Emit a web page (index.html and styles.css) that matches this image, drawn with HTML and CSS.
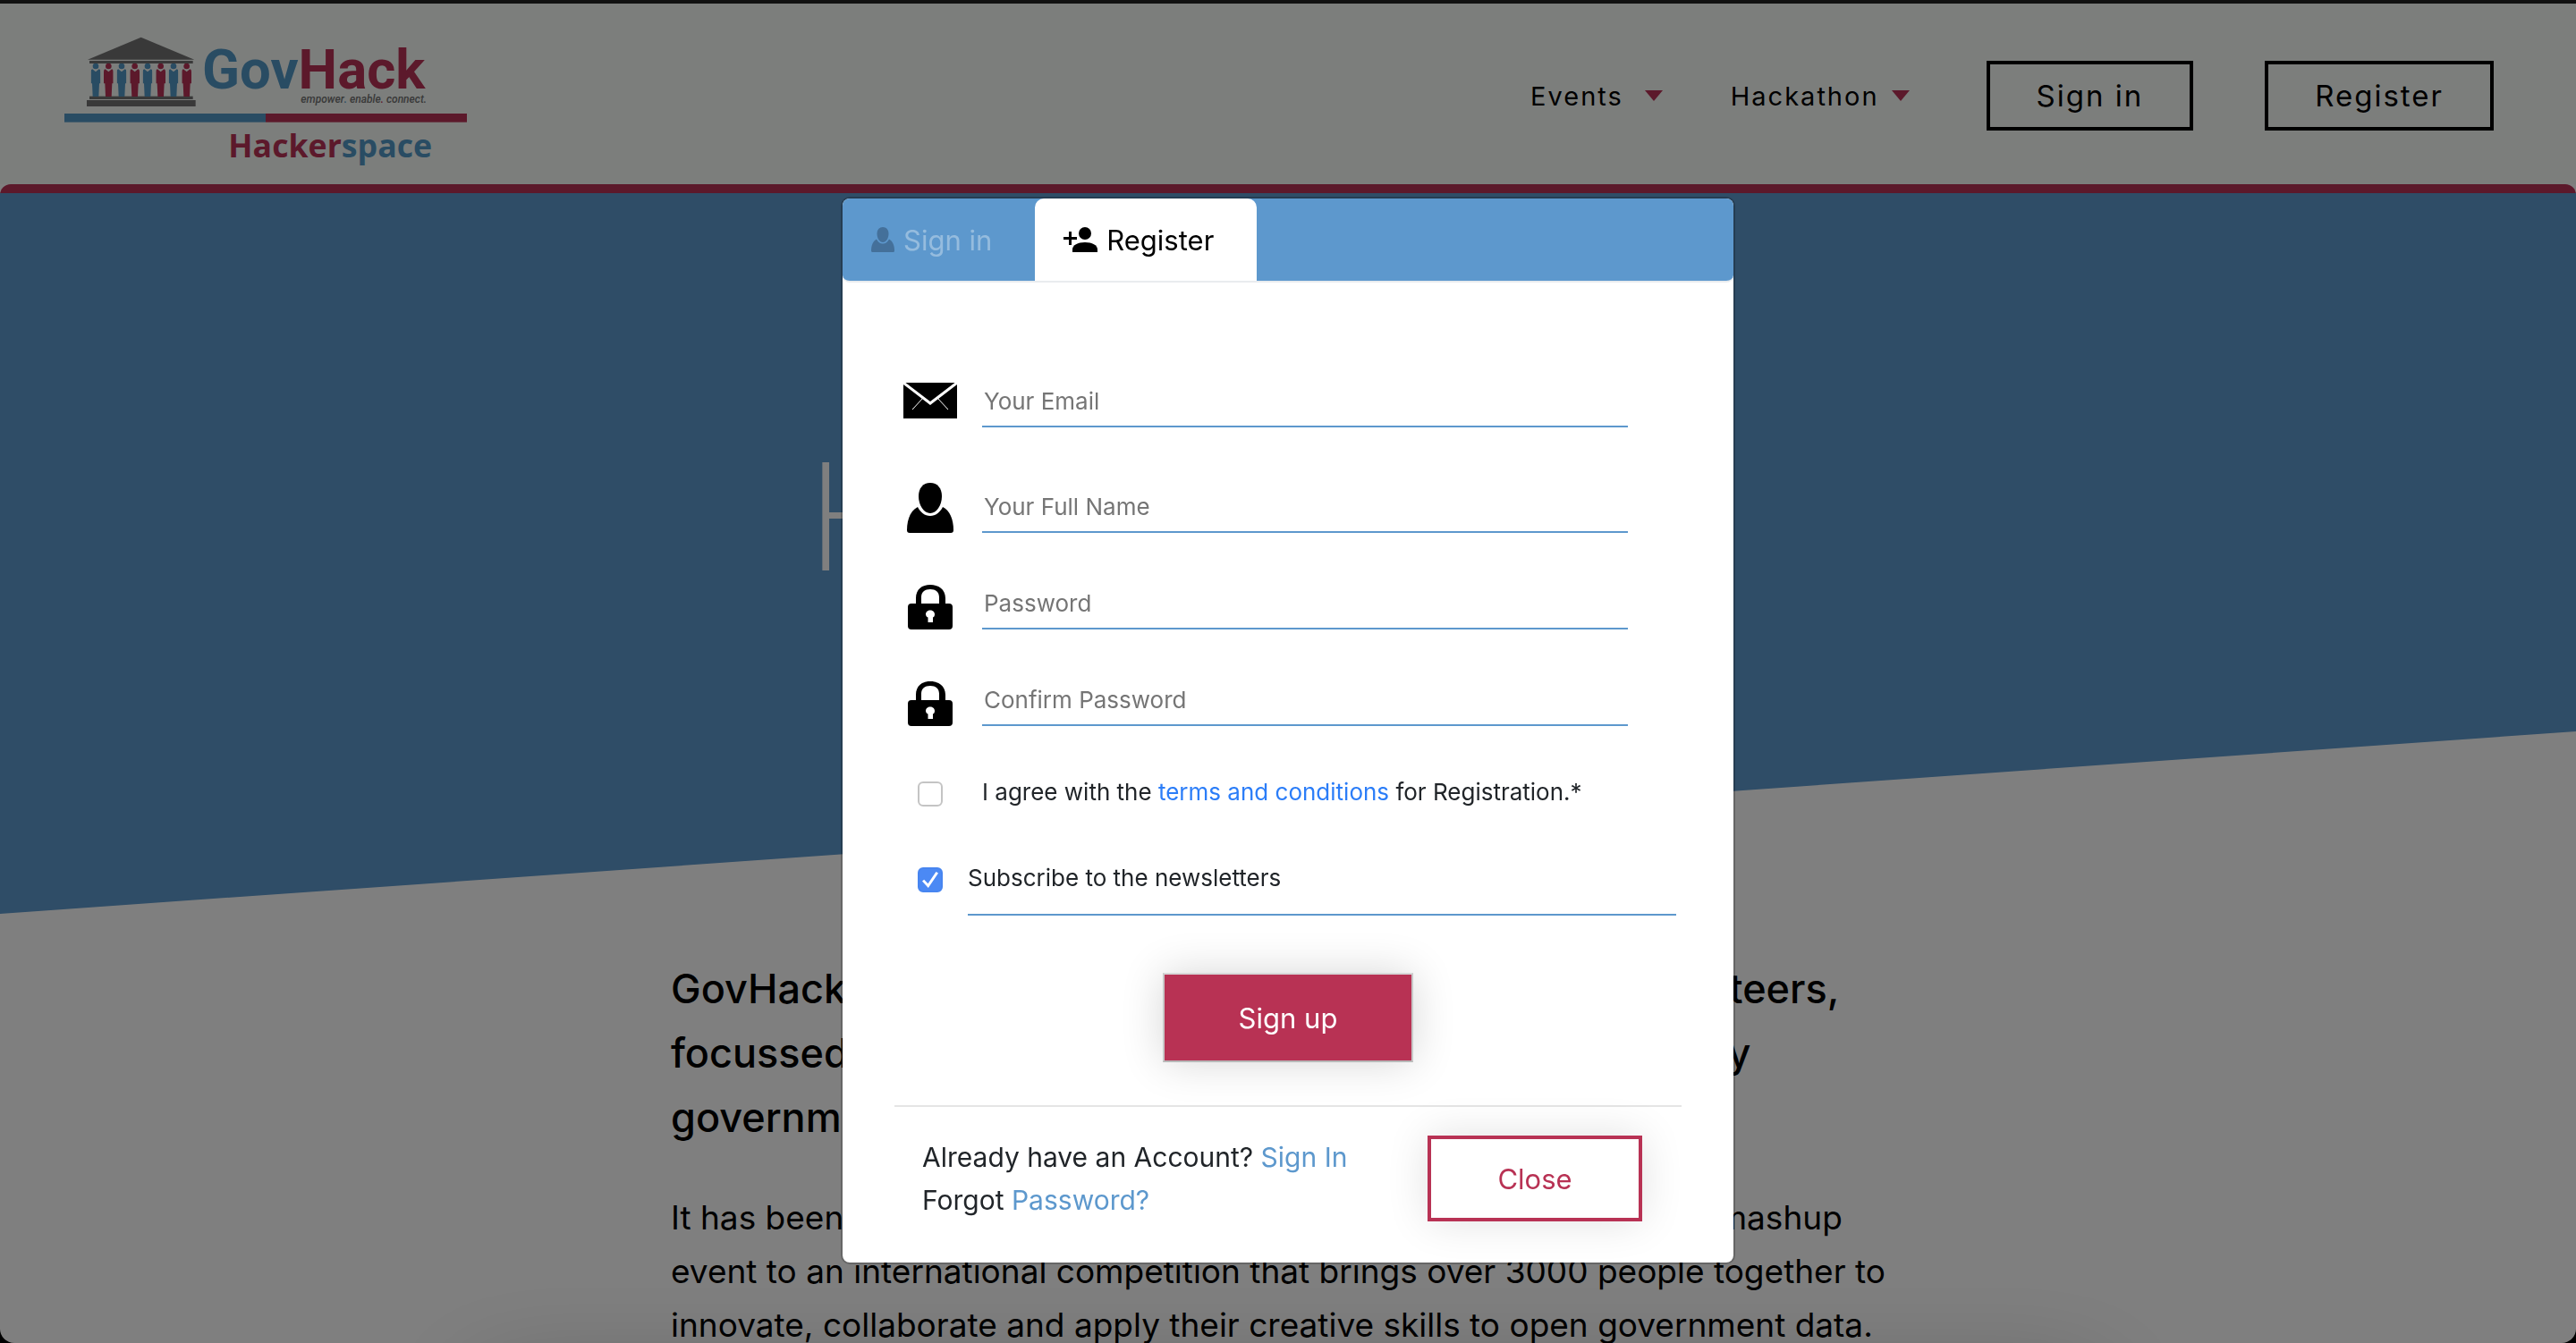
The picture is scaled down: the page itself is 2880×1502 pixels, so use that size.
FILE: index.html
```html
<!DOCTYPE html>
<html lang="en">
<head>
<meta charset="utf-8">
<title>GovHack Hackerspace</title>
<link rel="stylesheet" href="styles.css">
</head>
<body>
<svg width="0" height="0" class="sprite" aria-hidden="true">
  <symbol id="man" viewBox="0 0 32 112">
    <circle cx="16" cy="10" r="10"/>
    <path d="M5 20L16 29L27 20Q32 21 32 28V68H28L26 112H6L4 68H0V28Q0 21 5 20Z"/>
  </symbol>
  <symbol id="user" viewBox="0 0 52 56">
    <path d="M26 0C34 0 39 6 39 15C39 25 33 34 26 34C19 34 13 25 13 15C13 6 18 0 26 0Z"/>
    <path d="M12 27C15 33 20 37 26 37C32 37 37 33 40 27C48 31 52 41 52 53Q52 56 49 56H3Q0 56 0 53C0 41 4 31 12 27Z"/>
  </symbol>
  <symbol id="lock" viewBox="0 0 50 50">
    <path fill-rule="evenodd" d="M9 21V15C9 5 16 0 25 0S42 5 42 15V21H46Q50 21 50 25V46Q50 50 46 50H4Q0 50 0 46V25Q0 21 4 21ZM15 21H35V14C35 8 31 5 25 5S15 8 15 14ZM25 28.500C21.500 28.500 20 31 20 33C20 34.500 21 36 22.500 36.500V42H28V36.500C29.500 36 30 34.500 30 33C30 31 28.500 28.500 25 28.500Z"/>
  </symbol>
</svg>

<div class="window">
  <header class="header">
    <a class="logo" href="#" aria-label="GovHack Hackerspace">
      <svg viewBox="96 120 1350 441" width="450" height="147">
        <g fill="#727272">
          <path d="M174 200L353 125L532 200Z"/>
          <rect x="180" y="204" width="347" height="9"/>
          <rect x="180" y="323" width="347" height="10"/>
          <rect x="171" y="336" width="365" height="21"/>
        </g>
        <g fill="#5399c6">
          <use href="#man" x="185" y="212" width="32" height="112"/>
          <use href="#man" x="272" y="212" width="32" height="112"/>
          <use href="#man" x="359" y="212" width="32" height="112"/>
          <use href="#man" x="446" y="212" width="32" height="112"/>
          <rect x="96" y="381" width="675" height="29"/>
        </g>
        <g fill="#b83356">
          <use href="#man" x="228" y="212" width="32" height="112"/>
          <use href="#man" x="316" y="212" width="32" height="112"/>
          <use href="#man" x="403" y="212" width="32" height="112"/>
          <use href="#man" x="490" y="212" width="32" height="112"/>
          <rect x="771" y="381" width="675" height="29"/>
        </g>
        <text x="558" y="298" class="logo-name"><tspan class="c-blue">Gov</tspan><tspan class="c-red">Hack</tspan></text>
        <text x="889" y="345" class="logo-tag">empower<tspan class="c-blue">.</tspan> enable<tspan class="c-red">.</tspan> connect.</text>
        <text x="646" y="527" class="logo-sub"><tspan class="c-red">Hacker</tspan><tspan class="c-blue">space</tspan></text>
      </svg>
    </a>
    <nav class="nav">
      <a class="nav-link nav-events" href="#">Events <span class="caret"></span></a>
      <a class="nav-link" href="#">Hackathon <span class="caret"></span></a>
      <button class="nav-button" type="button">Sign in</button>
      <button class="nav-button" type="button">Register</button>
    </nav>
  </header>

  <section class="hero">
    <div class="hero-shape"><h1 class="hero-title">Hackerspace</h1></div>
  </section>

  <main class="about">
    <p class="lead">GovHack is run by a national group of passionate volunteers,<br>focussed on making open data work for a community by<br>government</p>
    <p class="text">It has been steadily growing from a small Australian Canberra data mashup<br>event to an international competition that brings over 3000 people together to<br>innovate, collaborate and apply their creative skills to open government data.</p>
  </main>
  <section class="panel"></section>
</div>

<div class="overlay">
  <div class="modal" role="dialog" aria-label="Register">
    <div class="tabs" role="tablist">
      <button class="tab" type="button" role="tab"><svg class="tab-user" width="26" height="28"><use href="#user"/></svg><span>Sign in</span></button>
      <button class="tab tab-active" type="button" role="tab" aria-selected="true">
        <svg width="38" height="28" viewBox="0 0 38 28"><path d="M6 5H9V11H15V14H9V20H6V14H0V11H6Z"/><ellipse cx="24" cy="7" rx="7" ry="7"/><path d="M10 28V25C10 20 16 17 24 17S38 20 38 25V28Z"/></svg><span>Register</span></button>
    </div>
    <form class="form">
      <label class="field field-email">
        <span class="icon"><svg width="60" height="50" viewBox="0 0 60 50"><path d="M0 0H60V40H0Z"/><path d="M0 0L30 23L60 0" fill="none" stroke="#fff" stroke-width="3"/><path d="M22 17L10 30M38 17L50 30" stroke="#fff" stroke-width="1"/></svg></span>
        <input class="input" type="email" placeholder="Your Email" aria-label="Your Email">
      </label>
      <label class="field">
        <span class="icon"><svg width="52" height="56"><use href="#user"/></svg></span>
        <input class="input" type="text" placeholder="Your Full Name" aria-label="Your Full Name">
      </label>
      <label class="field">
        <span class="icon"><svg width="50" height="50"><use href="#lock"/></svg></span>
        <input class="input" type="password" placeholder="Password" aria-label="Password">
      </label>
      <label class="field">
        <span class="icon"><svg width="50" height="50"><use href="#lock"/></svg></span>
        <input class="input" type="password" placeholder="Confirm Password" aria-label="Confirm Password">
      </label>
      <div class="check check-terms">
        <span class="icon"><input class="box" type="checkbox" id="terms"></span>
        <label class="terms-label" for="terms">I agree with the <a class="terms-link" href="#">terms and conditions</a> for Registration.*</label>
      </div>
      <div class="check">
        <span class="icon"><input class="box" type="checkbox" id="news" checked></span>
        <label class="news-label" for="news">Subscribe to the newsletters</label>
      </div>
      <button class="submit" type="submit">Sign up</button>
    </form>
    <hr class="rule">
    <div class="footer">
      <p class="help">Already have an Account? <a href="#">Sign In</a><br>Forgot <a href="#">Password?</a></p>
      <button class="close" type="button">Close</button>
    </div>
  </div>
</div>
</body>
</html>
```
FILE: styles.css
```css
* { box-sizing: border-box; }
body {
  margin: 0;
  background: #000;
  color: #212529;
  font-family: Inter, "Liberation Sans", sans-serif;
  overflow: hidden;
}
button, input { font-family: inherit; }
a { text-decoration: none; }
.sprite { position: absolute; }

.window {
  height: 100vh;
  overflow: hidden;
  border-top: 4px solid #222;
  border-radius: 0 0 16px 16px;
  background: #fff;
}
.header {
  display: flex;
  justify-content: space-between;
  align-items: center;
  height: 202px;
  padding: 4px 92px 0 72px;
  background: #f8fcf8;
}
.logo { display: flex; margin-top: 12px; }
.logo svg { overflow: visible; }
.c-blue { fill: #5399c6; }
.c-red { fill: #b83356; }
.logo-name { font: 700 185px Roboto, sans-serif; }
.logo-tag { font: italic 500 36px Roboto, sans-serif; fill: #727272; }
.logo-sub { font: 700 107px "Open Sans", sans-serif; }

.nav { display: flex; align-items: center; gap: 80px; }
.nav-link {
  display: flex;
  align-items: center;
  gap: 14px;
  margin-right: 6px;
  font-size: 29px;
  letter-spacing: 2px;
  color: #000;
}
.nav-events { gap: 24px; margin-right: -4px; }
.caret {
  border: 10px solid transparent;
  border-top: 12px solid #b83356;
  border-bottom: 0;
}
.nav-button {
  height: 78px;
  padding: 0 52px;
  border: 4px solid #000;
  background: none;
  color: #000;
  font-size: 33px;
  letter-spacing: 2px;
}
.hero {
  border-top: 10px solid #b83356;
  border-radius: 12px 12px 0 0;
}
.hero-shape {
  height: 806px;
  padding-top: 262px;
  background: #5e9ace;
  clip-path: polygon(0 0, 100% 0, 100% 602px, 0 100%);
}
.hero-title {
  max-width: 1076px;
  margin: 0 auto;
  color: #fff;
  font-size: 166px;
  font-weight: 200;
  line-height: 200px;
}
.about {
  max-width: 1380px;
  margin: 48px auto 0;
  color: #000;
  white-space: nowrap;
}
.lead {
  margin: 0;
  font-size: 45px;
  font-weight: 500;
  line-height: 72px;
}
.text {
  margin: 46px 0 0;
  font-size: 37px;
  line-height: 60px;
}
.panel {
  width: 63%;
  height: 300px;
  margin: 40px auto 0;
  box-shadow: 0 0 120px rgba(0, 0, 0, .3);
}

.overlay {
  position: fixed;
  inset: 0;
  padding-top: 220px;
  background: rgba(0, 0, 0, .5);
}
.modal {
  width: 100%;
  max-width: 1000px;
  margin: 0 auto;
  border: 2px solid rgba(0, 0, 0, .2);
  border-radius: 10px;
  background: #fff;
  background-clip: padding-box;
}
.tabs {
  display: flex;
  height: 94px;
  border-bottom: 2px solid #e9ecef;
  border-radius: 8px;
  background: #5d98cd;
}
.tab {
  display: flex;
  align-items: center;
  gap: 10px;
  padding: 0 48px 0 32px;
  border: 0;
  border-radius: 10px 10px 0 0;
  background: none;
  color: rgba(255, 255, 255, .35);
  font-size: 31px;
}
.tab-user { fill: #44709a; }
.tab-active { background: #fff; color: #000; }
.form {
  display: flex;
  flex-direction: column;
  padding: 102px 64px 0 56px;
}
.field {
  display: flex;
  align-items: flex-end;
  gap: 16px;
  margin: 0 54px 48px 0;
}
.field-email { margin-bottom: 58px; }
.icon {
  display: flex;
  flex: none;
  justify-content: center;
  width: 84px;
}
.input {
  flex: 1;
  min-width: 0;
  height: 60px;
  padding: 2px 2px 0;
  border: 0;
  border-bottom: 2px solid #5d98cd;
  outline: 0;
  background: none;
  font-size: 26px;
}
.input::placeholder { color: #757575; opacity: 1; }
.check { display: flex; align-items: flex-start; font-size: 26px; line-height: 40px; }
.check .icon { padding-top: 8px; }
.check-terms { gap: 16px; margin: 6px 0 56px; }
.box {
  appearance: none;
  width: 28px;
  height: 28px;
  margin: 0;
  border: 2px solid #c4c4c4;
  border-radius: 6px;
  background: #fff;
}
.box:checked {
  display: grid;
  place-items: center;
  border-color: #4785f0;
  background: #4b89f4;
}
.box:checked::before {
  content: "";
  width: 18px;
  height: 18px;
  background: #fff;
  clip-path: polygon(0 58%, 12% 48%, 36% 74%, 86% 0, 100% 8%, 38% 100%);
}
.terms-link { color: #2b7df8; }
.news-label {
  flex: 1;
  padding-bottom: 20px;
  border-bottom: 2px solid #5d98cd;
}
.submit {
  align-self: center;
  width: 280px;
  height: 100px;
  margin: 64px 0 0 8px;
  border: 2px solid;
  border-color: #d8d8d8 #c8c8c8 #b8b8b8;
  background: #b83254;
  color: #fff;
  font-size: 31px;
  box-shadow: 0 0 48px rgba(0, 0, 0, .16);
}
.rule {
  height: 2px;
  margin: 48px 58px 32px;
  border: 0;
  background: #e5e5e5;
}
.footer {
  display: flex;
  justify-content: space-between;
  padding: 0 102px 46px 89px;
}
.help { margin: 0; font-size: 30px; line-height: 48px; }
.help a { color: #5d98cd; }
.close {
  width: 240px;
  height: 96px;
  border: 4px solid #b83254;
  background: #fff;
  color: #b83254;
  font-size: 31px;
  box-shadow: 0 0 48px rgba(0, 0, 0, .12);
}
```
